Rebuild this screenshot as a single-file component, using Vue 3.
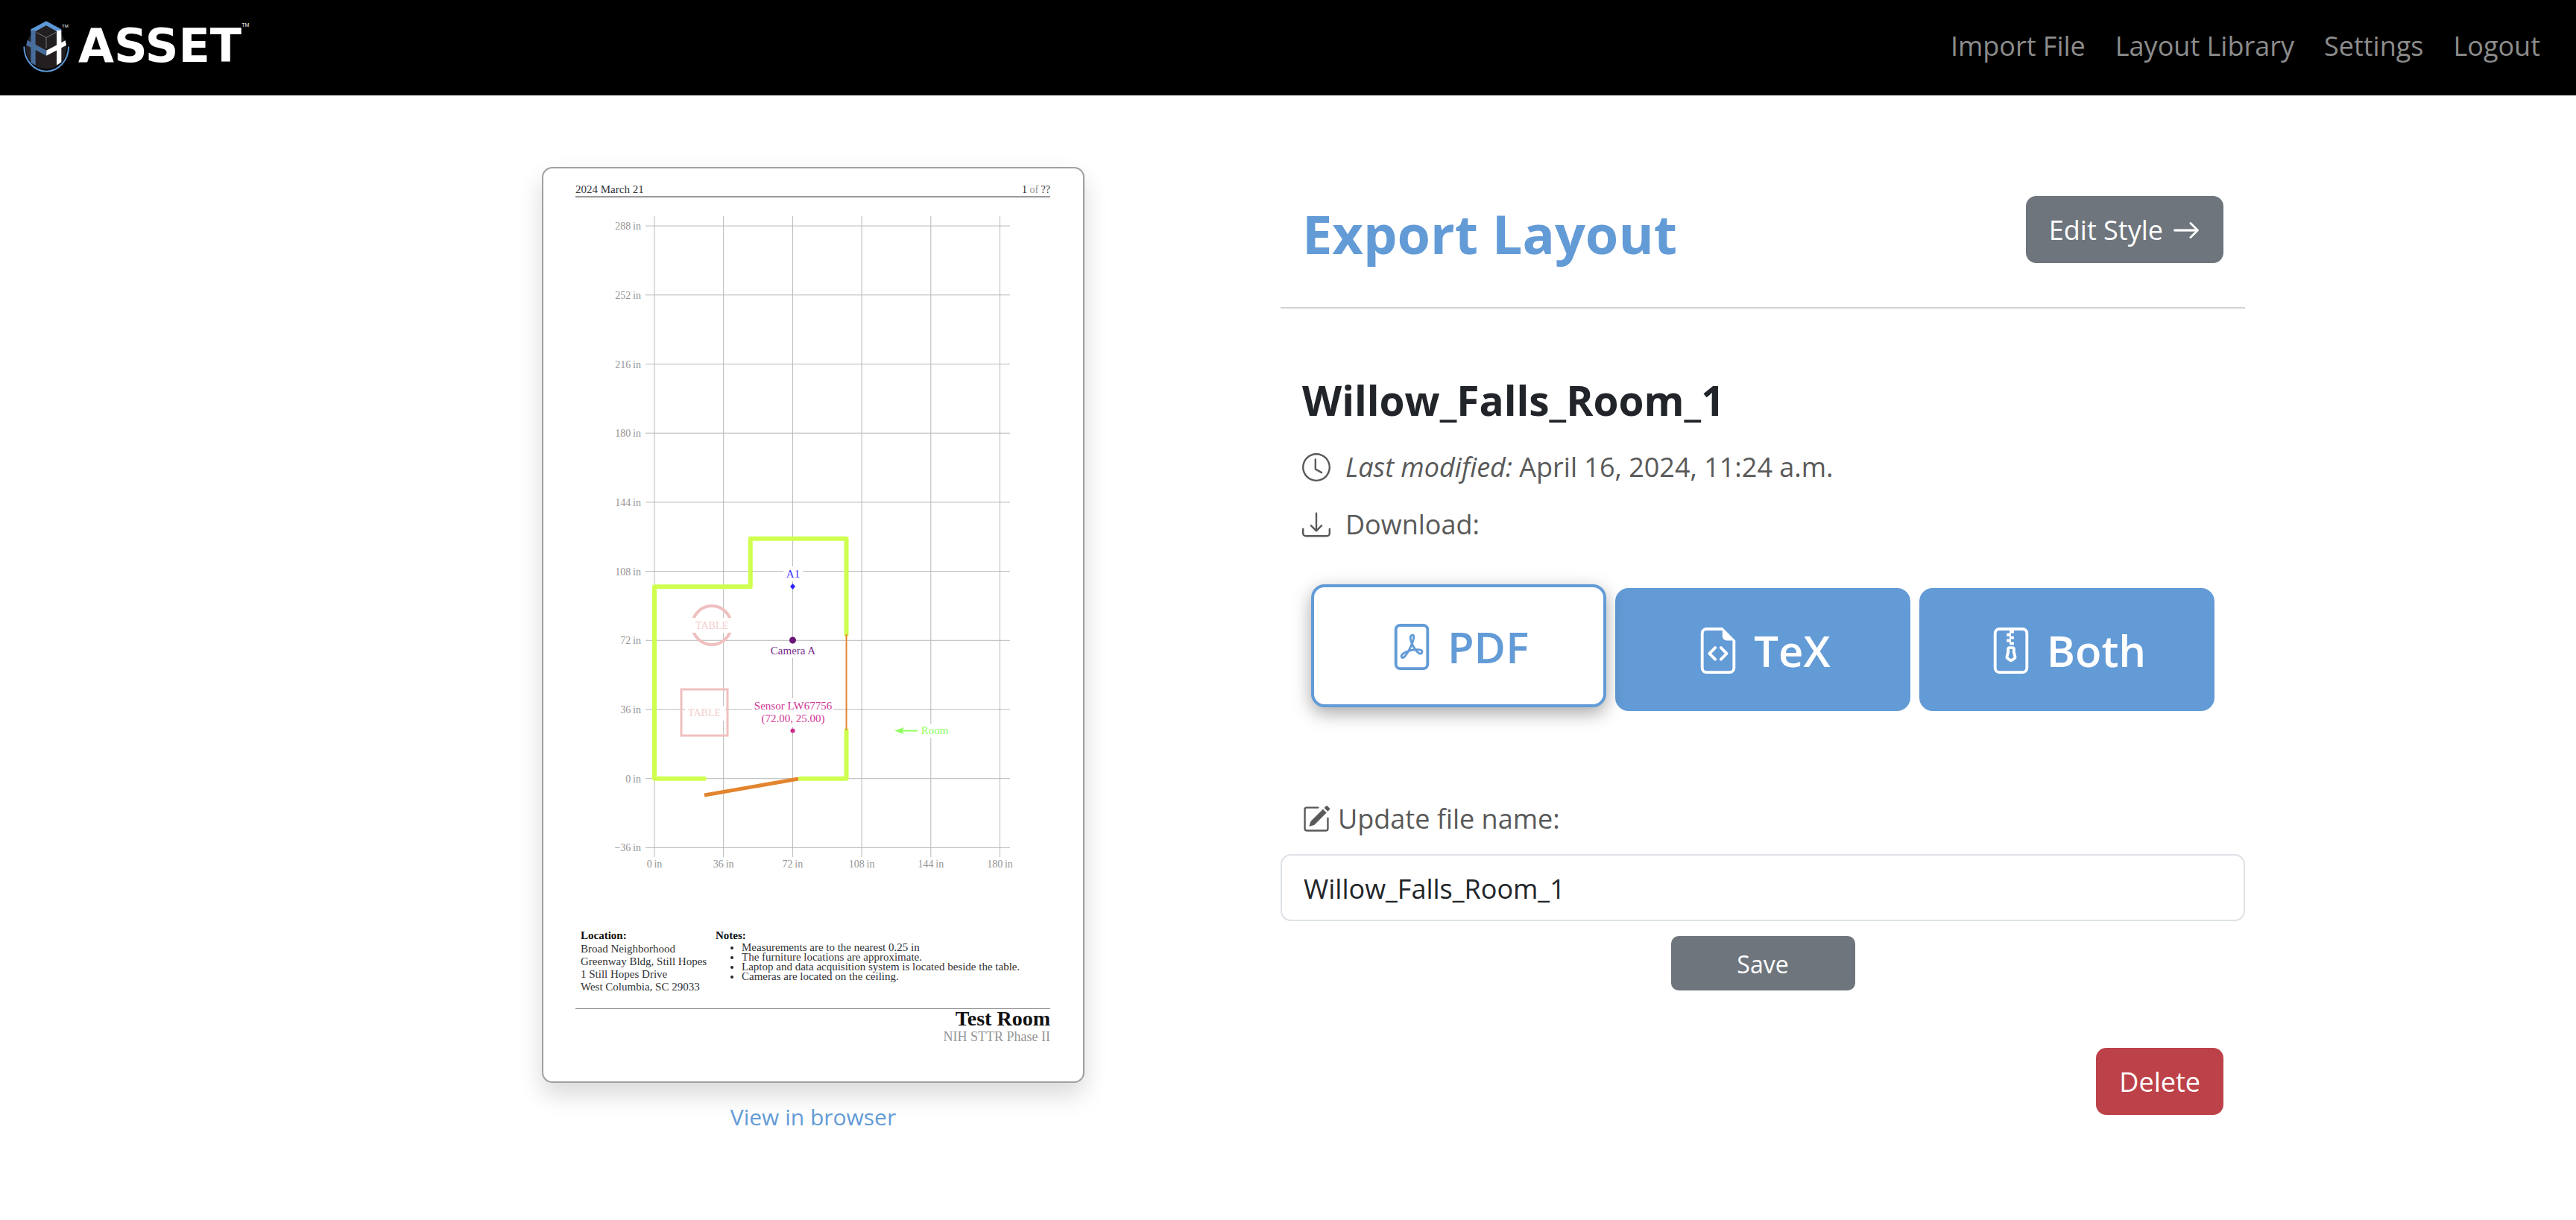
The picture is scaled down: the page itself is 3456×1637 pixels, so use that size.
<script setup>
import { ref } from 'vue'

const fileName = ref('Willow_Falls_Room_1')
const savedName = ref('Willow_Falls_Room_1')

const navLinks = ['Import File', 'Layout Library', 'Settings', 'Logout']

// Plan geometry: the origin corner of the room sits at (151, 821); 36 inches span 93 units.
const px = (inches) => 151 + inches * 2.575
const py = (inches) => 820.7 - inches * 2.575

const columns = [0, 36, 72, 108, 144, 180]
const rows = [-36, 0, 36, 72, 108, 144, 180, 216, 252, 288]

const wallMain = [[26, 0], [0, 0], [0, 100], [50, 100], [50, 125], [100, 125], [100, 75]]
const wallCorner = [[100, 25], [100, 0], [76, 0]]
const points = (list) => list.map(([x, y]) => `${px(x)},${py(y)}`).join(' ')

const address = ['Broad Neighborhood', 'Greenway Bldg, Still Hopes', '1 Still Hopes Drive', 'West Columbia, SC 29033']
const notes = [
  'Measurements are to the nearest 0.25 in',
  'The furniture locations are approximate.',
  'Laptop and data acquisition system is located beside the table.',
  'Cameras are located on the ceiling.',
]

const save = () => {
  savedName.value = fileName.value
}
</script>

<template>
  <header class="navbar">
    <a class="brand" href="#" aria-label="ASSET home">
      <svg class="mark" viewBox="93 75 186 213" aria-hidden="true">
        <ellipse cx="186" cy="190" rx="82" ry="83" fill="#231f20" />
        <path d="M97 183A89 99 0 0 0 276 183" fill="none" stroke="#5d98d6" stroke-width="6" />
        <path d="M124 113 186 80 247 113V122H228L186 99 143 122H124Z" fill="#5d98d6" />
        <path d="M143 122 186 98 228 122V180L186 200 143 180Z" fill="#231f20" />
        <path d="M124 118H143V258L124 248Z" fill="#476d9c" />
        <path d="M110 157 187 199V220L106 178Z" fill="#476d9c" />
        <path d="M228 118H247V246L228 258Z" fill="#fff" />
        <path d="M263 158 187 199V220L267 178Z" fill="#fff" />
        <path d="M147 126 186 147 225 126M186 147V190" fill="none" stroke="#a5a5a5" stroke-width="2" />
        <text x="249" y="105" fill="#fff" font-family="Liberation Sans" font-size="18">TM</text>
      </svg>
      <span class="wordmark">ASSET</span>
      <span class="tm">TM</span>
    </a>
    <nav class="links">
      <a v-for="link in navLinks" :key="link" href="#">{{ link }}</a>
    </nav>
  </header>

  <main class="page">
    <section class="preview">
      <svg class="sheet" viewBox="0 0 724 1225" role="img" aria-label="Room layout preview">
        <g transform="translate(-2 -2)">
          <text x="45" y="35" class="body">2024 March 21</text>
          <text x="682" y="35" class="small dim" text-anchor="end"><tspan class="ink">1</tspan> of <tspan class="ink">??</tspan></text>
          <path d="M45 40H682" stroke="#9a9a9a" stroke-width="2" />

          <g stroke="#b8b8b8" stroke-width="1">
            <path v-for="c in columns" :key="c" :d="`M${px(c)} 66V926`" />
            <path v-for="r in rows" :key="r" :d="`M139 ${py(r)}H628`" />
          </g>
          <g class="small dim">
            <text v-for="c in columns" :key="c" :x="px(c)" y="940" text-anchor="middle">{{ c }}&#8201;in</text>
            <text v-for="r in rows" :key="r" x="133" :y="py(r) + 5" text-anchor="end">{{ r < 0 ? '−' + -r : r }}&#8201;in</text>
          </g>

          <g fill="none" stroke="#cfff4f" stroke-width="6" stroke-linecap="round" stroke-linejoin="round">
            <polyline :points="points(wallMain)" />
            <polyline :points="points(wallCorner)" />
          </g>
          <path d="M408.500 627V756" stroke="#e3852f" stroke-width="2" />
          <path d="M344 821 218 843" stroke="#e3852f" stroke-width="5" />

          <circle cx="228" cy="615" r="26" fill="none" stroke="#f0bfbf" stroke-width="4" />
          <rect x="198" y="605" width="60" height="20" fill="#fff" />
          <rect x="187" y="701" width="62" height="62" fill="none" stroke="#f0bfbf" stroke-width="3" />
          <rect x="192" y="723" width="54" height="20" fill="#fff" />
          <g class="small table-label">
            <text x="228" y="620">TABLE</text>
            <text x="218" y="737">TABLE</text>
          </g>

          <rect x="324" y="536" width="26" height="20" fill="#fff" />
          <text x="337" y="551" class="label anchor-label">A1</text>
          <path d="M336.500 559 340 563 336.500 567 333 563Z" fill="#2d20f5" />

          <rect x="302" y="640" width="69" height="19" fill="#fff" />
          <circle cx="336.500" cy="635" r="4.500" fill="#6c1679" />
          <text x="337" y="654" class="label camera-label">Camera A</text>

          <rect x="282" y="713" width="109" height="38" fill="#fff" />
          <text x="337" y="728" class="label sensor-label">Sensor LW67756</text>
          <text x="337" y="745" class="label sensor-label">(72.00, 25.00)</text>
          <circle cx="336.500" cy="756.500" r="3" fill="#cc2d8c" />

          <rect x="507" y="747" width="44" height="19" fill="#fff" />
          <path d="M504 756.500H480" stroke="#8dff5a" stroke-width="2" />
          <path d="M473 756.500 486 752 483 756.500 486 761Z" fill="#8dff5a" />
          <text x="527" y="761" class="label room-label">Room</text>

          <text x="52" y="1036" class="body bold">Location:</text>
          <text v-for="(line, i) in address" :key="line" x="52" :y="1054 + i * 17" class="body">{{ line }}</text>
          <text x="233" y="1036" class="body bold">Notes:</text>
          <g v-for="(line, i) in notes" :key="line">
            <circle cx="255" :cy="1048 + i * 13" r="2" />
            <text x="268" :y="1052 + i * 13" class="body">{{ line }}</text>
          </g>

          <path d="M45 1129.500H682" stroke="#858585" stroke-width="1" />
          <text x="682" y="1152" class="name bold" text-anchor="end">Test Room</text>
          <text x="682" y="1173" class="project dim" text-anchor="end">NIH STTR Phase II</text>
        </g>
      </svg>
      <a class="view-link" href="#">View in browser</a>
    </section>

    <section class="panel">
      <div class="panel-head">
        <h1>Export Layout</h1>
        <button class="btn" type="button">
          Edit Style
          <svg class="arrow" viewBox="0 0 16 16" aria-hidden="true"><path d="M1 8a.5.5 0 0 1 .5-.5h11.793l-3.147-3.146a.5.5 0 0 1 .708-.708l4 4a.5.5 0 0 1 0 .708l-4 4a.5.5 0 0 1-.708-.708L13.293 8.500H1.500A.5.5 0 0 1 1 8" stroke="currentColor" stroke-width=".3" /></svg>
        </button>
      </div>

      <h2>{{ savedName }}</h2>
      <div class="info">
        <p>
          <svg class="icon" viewBox="0 0 16 16" aria-hidden="true"><path d="M8 3.500a.5.5 0 0 0-1 0V9a.5.5 0 0 0 .252.434l3.500 2a.5.5 0 0 0 .496-.868L8 8.710z" /><path d="M8 16A8 8 0 1 0 8 0a8 8 0 0 0 0 16m7-8A7 7 0 1 1 1 8a7 7 0 0 1 14 0" /></svg>
          <span><em>Last modified:</em> April 16, 2024, 11:24 a.m.</span>
        </p>
        <p>
          <svg class="icon" viewBox="0 0 16 16" aria-hidden="true"><path d="M.5 9.900a.5.5 0 0 1 .5.5v2.500a1 1 0 0 0 1 1h12a1 1 0 0 0 1-1v-2.500a.5.5 0 0 1 1 0v2.500a2 2 0 0 1-2 2H2a2 2 0 0 1-2-2v-2.500a.5.5 0 0 1 .5-.5" /><path d="M7.646 11.854a.5.5 0 0 0 .708 0l3-3a.5.5 0 0 0-.708-.708L8.500 10.293V1.500a.5.5 0 0 0-1 0v8.793L5.354 8.146a.5.5 0 1 0-.708.708z" /></svg>
          <span>Download:</span>
        </p>
      </div>

      <div class="downloads">
        <button class="download raised" type="button">
          <svg viewBox="0 0 16 16" aria-hidden="true"><path d="M4 0a2 2 0 0 0-2 2v12a2 2 0 0 0 2 2h8a2 2 0 0 0 2-2V2a2 2 0 0 0-2-2zm0 1h8a1 1 0 0 1 1 1v12a1 1 0 0 1-1 1H4a1 1 0 0 1-1-1V2a1 1 0 0 1 1-1" /><path d="M4.603 12.087a.8.8 0 0 1-.438-.42c-.195-.388-.13-.776.08-1.102.198-.307.526-.568.897-.787a7.700 7.700 0 0 1 1.482-.645 20 20 0 0 0 1.062-2.227 7.300 7.300 0 0 1-.43-1.295c-.086-.4-.119-.796-.046-1.136.075-.354.274-.672.65-.823.192-.077.4-.12.602-.077a.7.7 0 0 1 .477.365c.088.164.12.356.127.538.007.187-.012.395-.047.614-.084.51-.27 1.134-.52 1.794a11 11 0 0 0 .98 1.686 5.800 5.800 0 0 1 1.334.05c.364.065.734.195.96.465.12.144.193.32.2.518.007.192-.047.382-.138.563a1.040 1.040 0 0 1-.354.416.86.86 0 0 1-.51.138c-.331-.014-.654-.196-.933-.417a5.700 5.700 0 0 1-.911-.95 11.600 11.600 0 0 0-1.997.406 11.300 11.300 0 0 1-1.021 1.510c-.29.35-.608.655-.926.787a.8.8 0 0 1-.58.029m1.379-1.901q-.25.115-.459.238c-.328.194-.541.383-.647.547-.094.145-.096.25-.04.361q.016.032.026.044l.035-.012c.137-.056.355-.235.635-.572a8 8 0 0 0 .45-.606m1.640-1.330a13 13 0 0 1 1.010-.193 12 12 0 0 1-.51-.858 21 21 0 0 1-.5 1.050zm2.446.45q.226.244.435.41c.24.19.407.253.498.256a.1.1 0 0 0 .07-.015.3.3 0 0 0 .094-.125.44.44 0 0 0 .059-.2.1.1 0 0 0-.026-.063c-.052-.062-.2-.152-.518-.209a4 4 0 0 0-.612-.053zM8.078 5.800a7 7 0 0 0 .2-.828q.046-.282.038-.465a.6.6 0 0 0-.032-.198.5.5 0 0 0-.145.04c-.087.035-.158.106-.196.283-.04.192-.03.469.046.822q.036.167.09.346z" /></svg>
          PDF
        </button>
        <button class="download" type="button">
          <svg viewBox="0 0 16 16" aria-hidden="true"><path d="M14 4.500V14a2 2 0 0 1-2 2H4a2 2 0 0 1-2-2V2a2 2 0 0 1 2-2h5.500zm-3 0A1.500 1.500 0 0 1 9.500 3V1H4a1 1 0 0 0-1 1v12a1 1 0 0 0 1 1h8a1 1 0 0 0 1-1V4.500z" /><path d="M8.646 6.646a.5.5 0 0 1 .708 0l2 2a.5.5 0 0 1 0 .708l-2 2a.5.5 0 0 1-.708-.708L10.293 9 8.646 7.354a.5.5 0 0 1 0-.708m-1.292 0a.5.5 0 0 0-.708 0l-2 2a.5.5 0 0 0 0 .708l2 2a.5.5 0 0 0 .708-.708L5.707 9l1.647-1.646a.5.5 0 0 0 0-.708" /></svg>
          TeX
        </button>
        <button class="download" type="button">
          <svg viewBox="0 0 16 16" aria-hidden="true"><path d="M6.500 7.500a1 1 0 0 1 1-1h1a1 1 0 0 1 1 1v.938l.4 1.599a1 1 0 0 1-.416 1.074l-.93.62a1 1 0 0 1-1.109 0l-.93-.62a1 1 0 0 1-.415-1.074l.4-1.599zm2 0h-1v.938a1 1 0 0 1-.03.243l-.4 1.598.93.62.93-.62-.4-1.598a1 1 0 0 1-.03-.243z" /><path d="M2 2a2 2 0 0 1 2-2h8a2 2 0 0 1 2 2v12a2 2 0 0 1-2 2H4a2 2 0 0 1-2-2zm5.500-1H4a1 1 0 0 0-1 1v12a1 1 0 0 0 1 1h8a1 1 0 0 0 1-1V2a1 1 0 0 0-1-1H9v1H8v1h1v1H8v1h1v1H7.500V5h-1V4h1V3h-1V2h1z" /></svg>
          Both
        </button>
      </div>

      <form class="rename" @submit.prevent="save">
        <label for="file-name">
          <svg class="icon" viewBox="0 0 16 16" aria-hidden="true"><path d="M15.502 1.940a.5.5 0 0 1 0 .706L14.459 3.690l-2-2L13.502.646a.5.5 0 0 1 .707 0l1.293 1.293zm-1.750 2.456-2-2L4.939 9.210a.5.5 0 0 0-.121.196l-.805 2.414a.25.25 0 0 0 .316.316l2.414-.805a.5.5 0 0 0 .196-.12l6.813-6.814z" /><path fill-rule="evenodd" d="M1 13.500A1.500 1.500 0 0 0 2.500 15h11a1.500 1.500 0 0 0 1.500-1.500v-6a.5.5 0 0 0-1 0v6a.5.5 0 0 1-.5.5h-11a.5.5 0 0 1-.5-.5v-11a.5.5 0 0 1 .5-.5H9a.5.5 0 0 0 0-1H2.500A1.500 1.500 0 0 0 1 2.500z" /></svg>
          Update file name:
        </label>
        <input id="file-name" v-model="fileName" type="text" />
        <button class="btn save" type="submit">Save</button>
      </form>

      <button class="btn delete" type="button">Delete</button>
    </section>
  </main>
</template>

<style>
body {
  margin: 0;
  background: #fff;
  color: #212529;
  font-family: "Open Sans", "Noto Sans", sans-serif;
  font-size: 36px;
  line-height: 54px;
}
</style>

<style scoped>
* {
  box-sizing: border-box;
}

a {
  text-decoration: none;
}

svg {
  fill: currentColor;
  flex: none;
}

button,
input {
  font: inherit;
}

.navbar {
  display: flex;
  align-items: center;
  justify-content: space-between;
  padding: 26px 48px 30px 31px;
  background: #000;
}

.brand {
  display: flex;
  align-items: center;
  color: #fff;
}

.mark {
  width: 62px;
  height: 72px;
  overflow: visible;
}

.wordmark {
  margin-left: 12px;
  font-family: "DejaVu Sans", sans-serif;
  font-size: 62px;
  font-weight: 700;
  line-height: 72px;
}

.tm {
  align-self: flex-start;
  font-family: "Liberation Sans", sans-serif;
  font-size: 7px;
  line-height: 16px;
}

.links {
  display: flex;
  gap: 40px;
}

.links a {
  color: #8c8c8c;
}

.page {
  display: grid;
  grid-template-columns: minmax(0, 1274fr) minmax(0, 1294fr);
  max-width: 2568px;
  margin: 96px auto;
}

.preview {
  display: flex;
  flex-direction: column;
  align-items: center;
  padding-left: 20px;
}

.sheet {
  width: 100%;
  max-width: 728px;
  height: auto;
  border: 2px solid #a39fa1;
  border-radius: 14px;
  background: #fff;
  box-shadow: 0 16px 32px rgba(0, 0, 0, 0.15);
  font-family: "Liberation Serif", serif;
}

.sheet text {
  fill: #333;
}

.sheet .small {
  font-size: 14px;
}

.sheet .body {
  font-size: 15px;
}

.sheet .label,
.sheet .table-label {
  text-anchor: middle;
}

.sheet .label {
  font-size: 15px;
}

.sheet .table-label text {
  fill: #f3cdcb;
}

.sheet .anchor-label {
  fill: #3d2ff5;
}

.sheet .camera-label {
  fill: #7a2a87;
}

.sheet .sensor-label {
  fill: #cf3796;
}

.sheet .room-label {
  fill: #8dff5a;
}

.sheet .bold {
  font-weight: 700;
  fill: #111;
}

.sheet .name {
  font-size: 28px;
}

.sheet .project {
  font-size: 18px;
}

.sheet .dim,
.sheet .dim text {
  fill: #959595;
}

.sheet .ink {
  fill: #333;
}

.view-link {
  margin-top: 23px;
  color: #639bd6;
  font-size: 30px;
  line-height: 45px;
}

.panel {
  display: flex;
  flex-direction: column;
}

.panel-head {
  display: flex;
  align-items: flex-start;
  justify-content: space-between;
  padding: 39px 29px 49px;
  border-bottom: 2px solid #d3d3d3;
}

h1 {
  margin: 0;
  color: #639bd6;
  font-size: 72px;
  font-weight: 700;
  line-height: 100px;
}

h2 {
  margin: 88px 29px 28px;
  font-size: 55px;
  font-weight: 700;
  line-height: 70px;
}

.btn {
  display: flex;
  align-items: center;
  gap: 12px;
  height: 90px;
  padding: 2px 31px 0;
  border: 0;
  border-radius: 14px;
  background: #6e757c;
  color: #fff;
}

.arrow {
  width: 38px;
  height: 38px;
}

.icon {
  width: 38px;
  height: 38px;
}

.info {
  display: flex;
  flex-direction: column;
  gap: 23px;
  padding: 0 29px;
  color: #595959;
}

.info p {
  display: flex;
  align-items: center;
  gap: 20px;
  margin: 0;
}

.downloads {
  display: flex;
  gap: 12px;
  margin: 58px 41px 0;
}

.download {
  display: flex;
  flex: 1;
  align-items: center;
  justify-content: center;
  gap: 17px;
  height: 165px;
  padding: 2px 0 0;
  border: 4px solid #639bd6;
  border-radius: 18px;
  background: #639bd6;
  color: #fff;
  font-size: 58px;
  font-weight: 600;
}

.download svg {
  width: 62px;
  height: 62px;
}

.raised {
  background: #fff;
  color: #639bd6;
  box-shadow: 0 8px 24px rgba(0, 0, 0, 0.35);
  transform: translateY(-5px);
}

.rename {
  display: flex;
  flex-direction: column;
  margin-top: 118px;
}

.rename label {
  display: flex;
  align-items: center;
  gap: 10px;
  margin: 0 29px 20px;
  color: #595959;
}

.rename input {
  width: 100%;
  height: 90px;
  padding: 2px 29px 0;
  border: 2px solid #dee2e6;
  border-radius: 14px;
  background: #fff;
  color: #212529;
}

.save {
  align-self: center;
  justify-content: center;
  width: 247px;
  height: 73px;
  margin-top: 20px;
  border-radius: 10px;
  font-size: 32px;
}

.delete {
  align-self: flex-end;
  margin: 77px 29px 0;
  background: #bd4148;
}
</style>
